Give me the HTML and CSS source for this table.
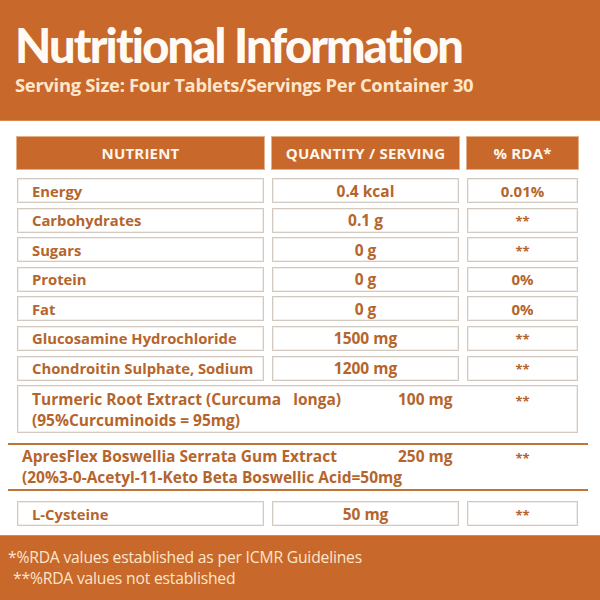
FILE: index.html
```html
<!DOCTYPE html>
<html>
<head>
<meta charset="utf-8">
<link rel="stylesheet" href="styles.css">
</head>
<body>
<header class="top">
  <h1 class="title">Nutritional Information</h1>
  <p class="subtitle">Serving Size: Four Tablets/Servings Per Container 30</p>
</header>
<main class="panel">
  <div class="row head">
    <div class="cell">NUTRIENT</div>
    <div class="cell">QUANTITY / SERVING</div>
    <div class="cell">% RDA*</div>
  </div>
  <div class="row item">
    <div class="cell name">Energy</div>
    <div class="cell qty">0.4 kcal</div>
    <div class="cell rda">0.01%</div>
  </div>
  <div class="row item">
    <div class="cell name">Carbohydrates</div>
    <div class="cell qty">0.1 g</div>
    <div class="cell rda star">**</div>
  </div>
  <div class="row item">
    <div class="cell name">Sugars</div>
    <div class="cell qty">0 g</div>
    <div class="cell rda star">**</div>
  </div>
  <div class="row item">
    <div class="cell name">Protein</div>
    <div class="cell qty">0 g</div>
    <div class="cell rda">0%</div>
  </div>
  <div class="row item">
    <div class="cell name">Fat</div>
    <div class="cell qty">0 g</div>
    <div class="cell rda">0%</div>
  </div>
  <div class="row item">
    <div class="cell name">Glucosamine Hydrochloride</div>
    <div class="cell qty">1500 mg</div>
    <div class="cell rda star">**</div>
  </div>
  <div class="row item">
    <div class="cell name">Chondroitin Sulphate, Sodium</div>
    <div class="cell qty">1200 mg</div>
    <div class="cell rda star">**</div>
  </div>
  <div class="wide boxed">
    <div class="wline">
      <span class="wname">Turmeric Root Extract (Curcuma&nbsp;&nbsp; longa)</span>
      <span class="wqty">100 mg</span>
      <span class="wrda">**</span>
    </div>
    <div class="wsub">(95%Curcuminoids = 95mg)</div>
  </div>
  <div class="wide lined">
    <div class="wline">
      <span class="wname">ApresFlex Boswellia Serrata Gum Extract</span>
      <span class="wqty">250 mg</span>
      <span class="wrda">**</span>
    </div>
    <div class="wsub">(20%3-0-Acetyl-11-Keto Beta Boswellic Acid=50mg</div>
  </div>
  <div class="row item last">
    <div class="cell name">L-Cysteine</div>
    <div class="cell qty">50 mg</div>
    <div class="cell rda star">**</div>
  </div>
</main>
<footer class="foot">
  <p>*%RDA values established as per ICMR Guidelines</p>
  <p class="second">**%RDA values not established</p>
</footer>
</body>
</html>
```
FILE: styles.css
```css
* { box-sizing: border-box; }
html, body { margin: 0; padding: 0; }
body {
  width: 600px;
  height: 600px;
  background: #ffffff;
  font-family: "Open Sans", Lato, sans-serif;
  overflow: hidden;
}
.top {
  height: 121px;
  background: #c8682a;
  padding: 20px 0 0 15px;
  border-bottom: 1px solid #d9874a;
}
.title {
  margin: 0;
  font-family: Lato, sans-serif;
  font-weight: 900;
  font-size: 47px;
  line-height: 50px;
  color: #fffaf4;
  letter-spacing: -1.85px;
}
.subtitle {
  margin: 3px 0 0 0;
  font-family: "Open Sans", sans-serif;
  font-weight: 700;
  font-size: 18.4px;
  line-height: 24px;
  color: #fde6cc;
  letter-spacing: -0.3px;
}
.panel {
  height: 414px;
  padding: 16px 0 0 0;
}
.row {
  display: grid;
  grid-template-columns: 247px 187px 111px;
  column-gap: 8px;
  margin-left: 17px;
}
.head { height: 32px; margin-bottom: 9px; }
.head .cell {
  background: #c8682a;
  color: #fff6ec;
  font-weight: 700;
  font-size: 15px;
  letter-spacing: 0.2px;
  display: flex;
  align-items: center;
  justify-content: center;
  box-shadow: 0 0 0 1px #e4b08a;
}
.item { height: 25px; margin-bottom: 4.6px; }
.item .cell {
  border: 1px solid #d2c9c0;
  box-shadow: inset 0 0 0 1px #f3eee9;
  display: flex;
  align-items: center;
  color: #b5652c;
  font-weight: 700;
  font-size: 14.8px;
}
.item .name { padding-left: 14px; }
.item .qty, .item .rda { justify-content: center; }
.item .qty { font-size: 15.5px; }
.item .rda { font-size: 15px; }
.item .star { font-size: 13px; padding-top: 2px; }
.wide {
  color: #b5652c;
  font-weight: 700;
  font-size: 15.5px;
}
.wline {
  display: grid;
  grid-template-columns: 366px 69px 111px;
  align-items: start;
}
.wname, .wsub, .wqty { white-space: nowrap; }
.boxed {
  margin-left: 17px;
  width: 561px;
  height: 48px;
  border: 1px solid #d2c9c0;
  box-shadow: inset 0 0 0 1px #f3eee9;
  padding: 4px 0 0 14px;
  line-height: 19px;
  margin-bottom: 10px;
}
.lined {
  margin-left: 8px;
  width: 580px;
  height: 48px;
  border-top: 2px solid #bf7536;
  border-bottom: 2px solid #bf7536;
  padding: 2px 0 0 14px;
  line-height: 18.5px;
  margin-bottom: 10px;
}
.lined .wline { grid-template-columns: 376px 69px 111px; }
.wrda { font-size: 13px; padding-top: 2px; text-align: center; }
.last { margin-bottom: 0; }
.foot {
  height: 65px;
  background: #c8682a;
  border-top: 1px solid #d98a52;
  padding: 11px 0 0 8px;
  color: #fde6cc;
  font-size: 15.7px;
  line-height: 21px;
  letter-spacing: -0.2px;
}
.foot p { margin: 0; }
.foot .second { padding-left: 5px; }
```
